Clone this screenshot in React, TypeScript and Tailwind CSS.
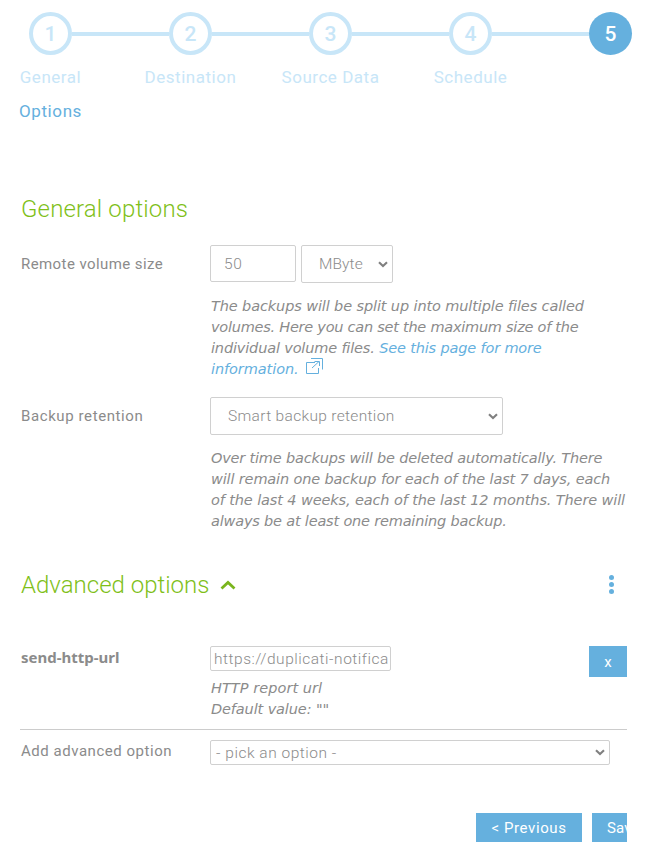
import type { ReactNode } from "react";

const steps = ["General", "Destination", "Source Data", "Schedule"];

function Chevron() {
  return (
    <svg width="10" height="7" viewBox="0 0 10 7" fill="none" className="shrink-0">
      <path d="M1 1.2 L5 5 L9 1.2" stroke="#808080" strokeWidth="2.1" />
    </svg>
  );
}

function Help({ className = "", children }: { className?: string; children: ReactNode }) {
  return (
    <div className={`pl-px font-['DejaVu_Sans',sans-serif] text-[14.5px] italic leading-[23px] ${className}`}>
      {children}
    </div>
  );
}

function Line({ className = "tracking-[-0.12px]", children }: { className?: string; children: ReactNode }) {
  return <div className={`h-[21px] whitespace-nowrap ${className}`}>{children}</div>;
}

function Steps() {
  return (
    <nav className="h-[124px] pt-3 text-[#c8e6f8]">
      <div className="flex items-center pl-[29px]">
        {steps.map((label, i) => (
          <div key={label} className="flex items-center">
            <div className="flex size-[43px] items-center justify-center rounded-full border-4 border-[#c8e6f8] pt-0.5 text-[21px] font-medium">
              {i + 1}
            </div>
            <div className="mt-px h-1 w-[97px] bg-[#c8e6f8]" />
          </div>
        ))}
        <div className="flex size-[43px] items-center justify-center rounded-full bg-[#65b0de] pt-0.5 text-[21px] font-medium text-white">5</div>
      </div>
      <div className="-ml-[19.5px] mt-[11px] flex text-[17px] leading-[22px] tracking-[0.53px]">
        {steps.map((label) => (
          <div key={label} className="w-[140px] text-center">{label}</div>
        ))}
      </div>
      <div className="mt-3 pl-[19px] text-[17px] leading-[22px] tracking-[0.6px] text-[#65b0de]">Options</div>
    </nav>
  );
}

export default function App() {
  return (
    <div className="h-[858px] w-[654px] overflow-hidden bg-white font-[Roboto,sans-serif] text-[15px] leading-[21px] text-[#8b8b8b]">
      <Steps />
      <main className="ml-5 w-[607px]">
        <h2 className="mt-[69px] h-[32px] pl-px text-[24px] font-light leading-[32px] tracking-[0.15px] text-[#7fbf1a]">General options</h2>

        <div className="mt-5 flex">
          <div className="w-[190px] pl-px pt-[9px] tracking-[0.42px]">Remote volume size</div>
          <div>
            <div className="flex gap-[5px]">
              <div className="flex h-[37px] w-[86px] items-center rounded-[2px] border border-[#d0d0d0] pl-[13px] pt-px text-[15.5px] font-light tracking-[0.6px]">50</div>
              <div className="flex h-[38px] w-[92px] items-center justify-between rounded-[2px] border border-[#d0d0d0] pl-[17px] pr-[4px] text-[15.5px] font-light tracking-[0.1px]">
                MByte <Chevron />
              </div>
            </div>
            <Help className="mt-3">
              <Line>The backups will be split up into multiple files called</Line>
              <Line className="tracking-[-0.25px]">volumes. Here you can set the maximum size of the</Line>
              <Line className="tracking-[-0.16px]">
                individual volume files. <span className="text-[#65b0de]">See this page for more</span>
              </Line>
              <Line className="flex tracking-[-0.08px] text-[#65b0de]">
                information.
                <svg width="17" height="17" viewBox="0 0 17 17" fill="none" stroke="#65b0de" className="ml-[7px]">
                  <path d="M9 4.5 H0.5 V15.5 H12.5 V10 M5 0.5 H16.5 V11.5 M6 10 L13 3.5 M8.5 3.5 H13.5 V8" />
                </svg>
              </Line>
            </Help>
          </div>
        </div>

        <div className="mt-[18px] flex">
          <div className="w-[190px] pl-px pt-[9px] tracking-[0.6px]">Backup retention</div>
          <div>
            <div className="flex h-[38px] w-[293px] items-center justify-between rounded-[2px] border border-[#d0d0d0] pl-[17px] pr-[4px] text-[15.5px] font-light tracking-[0.33px]">
              Smart backup retention <Chevron />
            </div>
            <Help className="mt-3">
              <Line className="tracking-[-0.19px]">Over time backups will be deleted automatically. There</Line>
              <Line className="tracking-[-0.15px]">will remain one backup for each of the last 7 days, each</Line>
              <Line>of the last 4 weeks, each of the last 12 months. There will</Line>
              <Line className="tracking-[-0.19px]">always be at least one remaining backup.</Line>
            </Help>
          </div>
        </div>

        <div className="mt-[38px] flex h-8 items-center pl-px">
          <h2 className="text-[24px] font-light leading-[32px] text-[#7fbf1a]">Advanced options</h2>
          <svg width="16" height="10" viewBox="0 0 16 10" fill="none" className="ml-[11px]">
            <path d="M1.5 8.5 L8 2.5 L14.5 8.5" stroke="#7ab51d" strokeWidth="2.8" />
          </svg>
          <svg width="6" height="20" viewBox="0 0 6 20" fill="#65b0de" className="ml-auto mr-[13px]">
            <circle cx="3.5" cy="2.5" r="2.5" />
            <circle cx="3.5" cy="9.5" r="2.5" />
            <circle cx="3.5" cy="16.5" r="2.5" />
          </svg>
        </div>

        <div className="mt-[45px] flex h-[84px] border-b border-[#cccccc]">
          <div className="w-[190px] pl-px pt-px font-['Noto_Sans',sans-serif] text-[15px] font-bold">send-http-url</div>
          <div>
            <div className="flex h-[25px] w-[181px] items-center overflow-hidden whitespace-nowrap rounded-[2px] border border-[#d0d0d0] pl-[3px] pt-0.5 text-[15.5px] font-light tracking-[0.52px]">
              https://duplicati-notifica
            </div>
            <Help className="mt-[6px]">
              <Line className="tracking-[0.05px]">HTTP report url</Line>
              <Line>Default value: ""</Line>
            </Help>
          </div>
          <button className="ml-auto h-[31px] w-[38px] bg-[#65b0de] pt-px text-[15px] text-white">x</button>
        </div>

        <div className="mt-[10px] flex">
          <div className="w-[190px] pl-px pt-px tracking-[0.53px]">Add advanced option</div>
          <div className="flex h-[25px] w-[400px] items-center justify-between rounded-[2px] border border-[#d0d0d0] pl-[5px] pr-[4px] text-[15.5px] font-light tracking-[0.52px]">
            <span className="pt-0.5">- pick an option -</span> <Chevron />
          </div>
        </div>

        <div className="mt-12 flex gap-[10px] overflow-hidden pl-[456px] text-white">
          <button className="h-[29px] w-[106px] shrink-0 bg-[#65b0de] pt-0.5 tracking-[0.6px]">&lt; Previous</button>
          <button className="h-[29px] w-[70px] shrink-0 bg-[#65b0de] pl-[15px] pt-0.5 text-left tracking-[0.2px]">Save</button>
        </div>
      </main>
    </div>
  );
}
